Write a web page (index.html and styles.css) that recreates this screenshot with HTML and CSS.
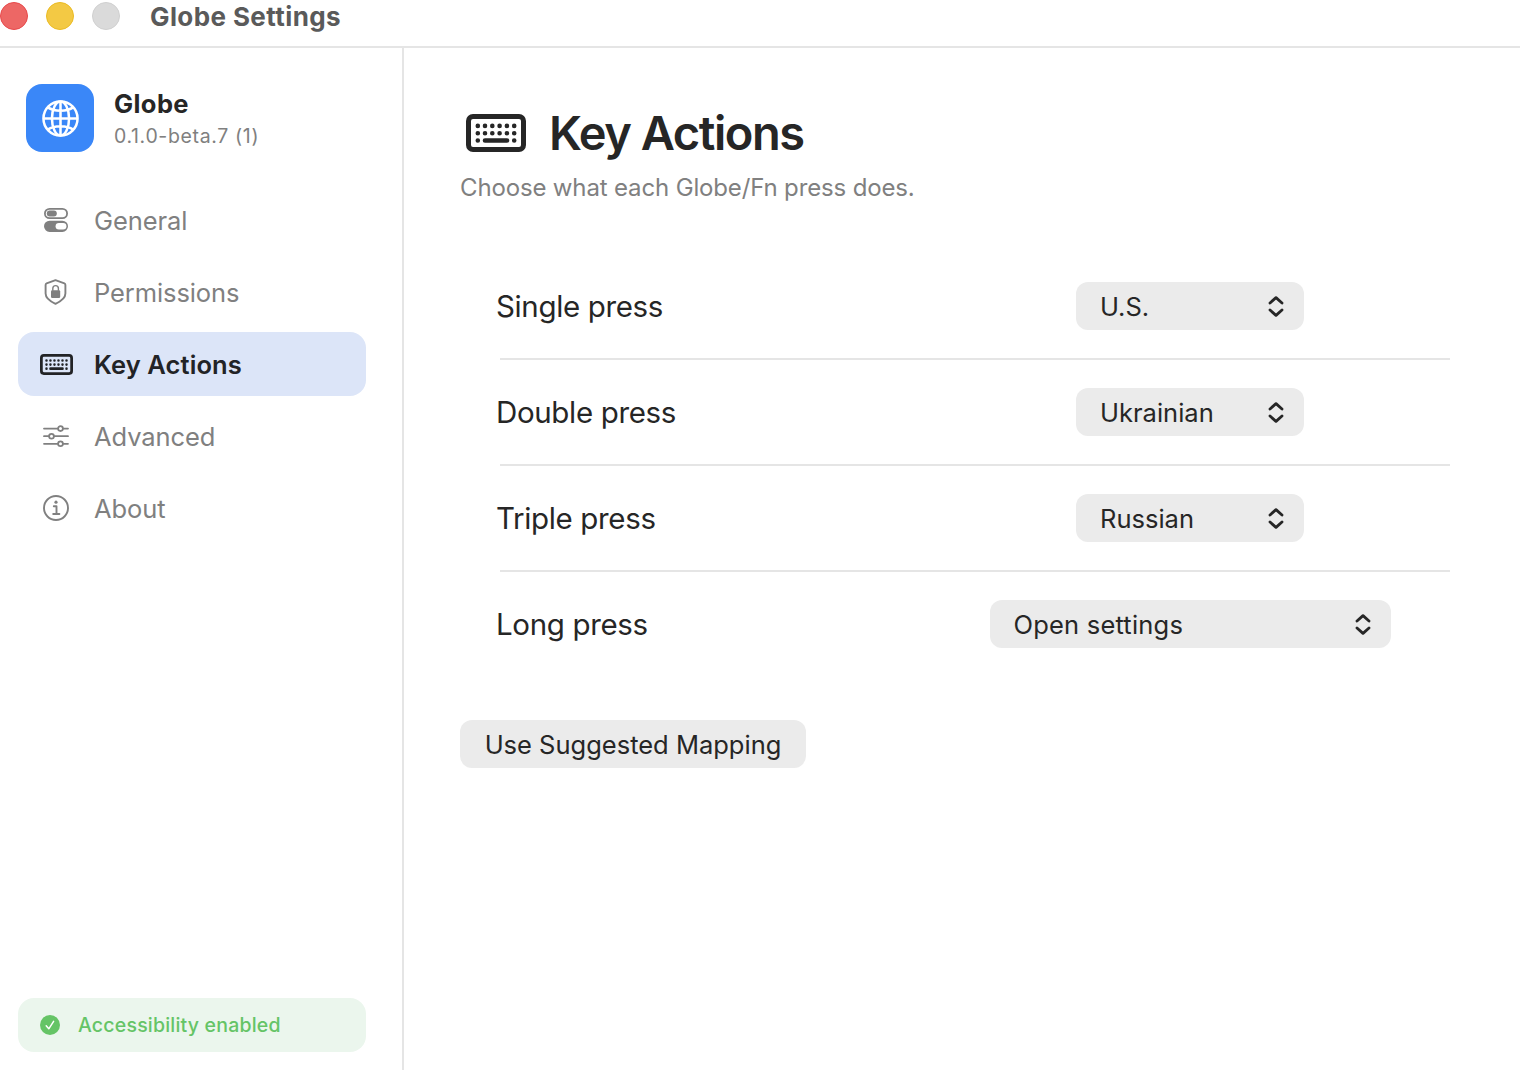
FILE: index.html
```html
<!DOCTYPE html>
<html lang="en">

<head>
    <meta charset="UTF-8">
    <meta name="viewport" content="width=device-width, initial-scale=1.0">
    <title>Globe Settings</title>
    <link rel="stylesheet" href="styles.css">
</head>

<body>
    <!-- shared icons -->
    <svg class="sprite" width="0" height="0">
        <symbol id="updown" viewBox="0 0 16 22">
            <path d="M2 7 L8 1.6 L14 7 M2 14 L8 19.4 L14 14" fill="none" stroke="currentColor" stroke-width="2.8" stroke-linecap="round" stroke-linejoin="round"/>
        </symbol>
        <symbol id="keyboard" viewBox="0 0 60 38">
            <rect x="2.5" y="2.5" width="55" height="33" rx="4.5" fill="none" stroke="currentColor" stroke-width="5"/>
            <path d="M11.8 11.9h.01M19 11.9h.01M26.3 11.9h.01M33.6 11.9h.01M40.9 11.9h.01M48.2 11.9h.01M11.8 19.2h.01M19 19.2h.01M26.3 19.2h.01M33.6 19.2h.01M40.9 19.2h.01M48.2 19.2h.01M11.8 26.5h.01M19 26.5H41M48.2 26.5h.01" fill="none" stroke="currentColor" stroke-width="4.6" stroke-linecap="round"/>
        </symbol>
    </svg>

    <header class="titlebar">
        <div class="lights">
            <span class="light red"></span>
            <span class="light yellow"></span>
            <span class="light gray"></span>
        </div>
        <span class="titlebar-text">Globe Settings</span>
    </header>

    <div class="window">
        <aside class="sidebar">
            <div class="app">
                <div class="app-icon">
                    <svg width="37" height="37" viewBox="0 0 38 38" fill="none" stroke="#fff" stroke-width="2.6">
                        <circle cx="19" cy="19" r="17.5"/>
                        <ellipse cx="19" cy="19" rx="8.8" ry="17.5"/>
                        <path d="M19 1.7v34.6M1.7 19h34.6M6 7.6c6.5 4.6 19.5 4.6 26 0M6 30.4c6.5-4.6 19.5-4.6 26 0"/>
                    </svg>
                </div>
                <div class="app-info">
                    <div class="app-name">Globe</div>
                    <div class="app-version">0.1.0-beta.7 (1)</div>
                </div>
            </div>

            <nav class="nav">
                <a class="nav-item">
                    <span class="nav-icon">
                        <svg width="26" height="26" viewBox="0 0 26 26">
                            <rect x="1.9" y="1.8" width="22.2" height="9.4" rx="4.7" fill="none" stroke="currentColor" stroke-width="1.8"/>
                            <rect x="3.8" y="3.6" width="10" height="5.8" rx="2.9" fill="currentColor"/>
                            <rect x="1.9" y="14.6" width="22.2" height="9.4" rx="4.7" fill="currentColor" stroke="currentColor" stroke-width="1.8"/>
                            <rect x="12.6" y="16" width="10.8" height="6.6" rx="3.3" fill="#fff"/>
                        </svg>
                    </span>
                    <span class="nav-text">General</span>
                </a>
                <a class="nav-item">
                    <span class="nav-icon">
                        <svg width="26" height="26" viewBox="0 0 26 26">
                            <path d="M12.5 1.2L21.4 4.4Q22.4 4.8 22.4 6V14.5C22.4 19.5 18 22.3 12.5 24.8C7 22.3 2.6 19.5 2.6 14.5V6Q2.6 4.8 3.6 4.4Z" fill="none" stroke="currentColor" stroke-width="1.9" stroke-linejoin="round"/>
                            <rect x="8" y="11.3" width="9.2" height="7.6" rx="1.2" fill="currentColor"/>
                            <path d="M9.8 11.8V9.4a2.8 2.8 0 0 1 5.6 0v2.4" fill="none" stroke="currentColor" stroke-width="1.4"/>
                        </svg>
                    </span>
                    <span class="nav-text">Permissions</span>
                </a>
                <a class="nav-item active">
                    <span class="nav-icon"><svg width="33" height="21"><use href="#keyboard"/></svg></span>
                    <span class="nav-text">Key Actions</span>
                </a>
                <a class="nav-item">
                    <span class="nav-icon">
                        <svg width="26" height="24" viewBox="0 0 26 24" fill="none" stroke="currentColor" stroke-width="1.8" stroke-linecap="round">
                            <path d="M1 4.6h13.8M20.2 4.6H25M1 12.2h4.8M11.2 12.2H25M1 19.8h13.8M20.2 19.8H25"/>
                            <circle cx="17.5" cy="4.6" r="2.4"/>
                            <circle cx="8.5" cy="12.2" r="2.4"/>
                            <circle cx="17.5" cy="19.8" r="2.4"/>
                        </svg>
                    </span>
                    <span class="nav-text">Advanced</span>
                </a>
                <a class="nav-item">
                    <span class="nav-icon">
                        <svg width="26" height="26" viewBox="0 0 26 26" fill="none" stroke="currentColor" stroke-width="1.9">
                            <circle cx="13" cy="13" r="12"/>
                            <path d="M10.8 11.3h2.7v7.4M10.2 19h6.2" stroke-linecap="round" stroke-linejoin="round"/>
                            <circle cx="13" cy="7.2" r="1.6" fill="currentColor" stroke="none"/>
                        </svg>
                    </span>
                    <span class="nav-text">About</span>
                </a>
            </nav>

            <div class="status">
                <svg width="20" height="20" viewBox="0 0 20 20">
                    <circle cx="10" cy="10" r="10" fill="#65c466"/>
                    <path d="M6.2 10.8L8.8 13.8L13.6 6.4" fill="none" stroke="#fff" stroke-width="1.5" stroke-linecap="round" stroke-linejoin="round"/>
                </svg>
                <span>Accessibility enabled</span>
            </div>
        </aside>

        <main class="content">
            <div class="heading">
                <svg width="60" height="38"><use href="#keyboard"/></svg>
                <h1>Key Actions</h1>
            </div>
            <p class="subtitle">Choose what each Globe/Fn press does.</p>

            <div class="rows">
                <div class="row">
                    <span class="label">Single press</span>
                    <div class="control">
                        <div class="select">U.S.<svg width="16" height="22"><use href="#updown"/></svg></div>
                    </div>
                </div>
                <div class="row">
                    <span class="label">Double press</span>
                    <div class="control">
                        <div class="select">Ukrainian<svg width="16" height="22"><use href="#updown"/></svg></div>
                    </div>
                </div>
                <div class="row">
                    <span class="label">Triple press</span>
                    <div class="control">
                        <div class="select">Russian<svg width="16" height="22"><use href="#updown"/></svg></div>
                    </div>
                </div>
                <div class="row">
                    <span class="label">Long press</span>
                    <div class="control">
                        <div class="select wide">Open settings<svg width="16" height="22"><use href="#updown"/></svg></div>
                    </div>
                </div>
            </div>

            <button class="button">Use Suggested Mapping</button>
        </main>
    </div>
</body>

</html>
```

FILE: styles.css
```css
* {
    box-sizing: border-box;
}

body {
    margin: 0;
    height: 1070px;
    display: flex;
    flex-direction: column;
    overflow: hidden;
    background: #fff;
    color: #262626;
    font-family: Inter, "Liberation Sans", sans-serif;
}

svg {
    display: block;
    flex-shrink: 0;
}

.sprite {
    display: none;
}

/* title bar */
.titlebar {
    height: 48px;
    flex-shrink: 0;
    display: flex;
    align-items: flex-start;
    gap: 30px;
    padding-top: 2px;
    border-bottom: 2px solid #e5e5e5;
}

.lights {
    display: flex;
    gap: 18px;
}

.light {
    width: 28px;
    height: 28px;
    border-radius: 50%;
}

.red {
    background: #ed6765;
    border: 1px solid #e8484a;
}

.yellow {
    background: #f3c944;
    border: 1px solid #ebbb22;
}

.gray {
    background: #dadada;
    border: 1px solid #d0d0d0;
}

.titlebar-text {
    font-size: 26px;
    line-height: 30px;
    font-weight: 700;
    letter-spacing: 0.4px;
    color: #5a5a5a;
}

.window {
    flex: 1;
    display: flex;
}

/* sidebar */
.sidebar {
    width: 404px;
    display: flex;
    flex-direction: column;
    padding: 36px 36px 18px 18px;
    border-right: 2px solid #e5e5e5;
}

.app {
    display: flex;
    gap: 20px;
    padding-left: 8px;
    margin-bottom: 36px;
}

.app-icon {
    width: 68px;
    height: 68px;
    display: flex;
    align-items: center;
    justify-content: center;
    padding: 1px 0 0 1px;
    border-radius: 16px;
    background: #3a87f8;
}

.app-name {
    margin-top: 4px;
    font-size: 25.5px;
    line-height: 32px;
    font-weight: 700;
    letter-spacing: 0.4px;
}

.app-version {
    font-size: 19.5px;
    line-height: 32px;
    letter-spacing: 0.65px;
    color: #808080;
}

.nav {
    display: flex;
    flex-direction: column;
    gap: 8px;
}

.nav-item {
    height: 64px;
    display: flex;
    align-items: center;
    gap: 18px;
    padding-left: 18px;
    border-radius: 16px;
    color: #808080;
    font-size: 25.5px;
    letter-spacing: -0.1px;
}

.nav-icon {
    width: 40px;
    display: flex;
    justify-content: center;
}

.nav-item.active {
    background: #dce5f8;
    color: #222326;
    font-weight: 600;
    letter-spacing: 0.1px;
}

.nav-item.active .nav-icon {
    padding-top: 1px;
}

.status {
    height: 54px;
    display: flex;
    align-items: center;
    gap: 18px;
    margin-top: auto;
    padding-left: 22px;
    border-radius: 16px;
    background: #ebf6ed;
    color: #65c466;
    font-size: 19.5px;
    font-weight: 500;
    letter-spacing: 0.2px;
}

/* content */
.content {
    flex: 1;
    padding: 56px 70px 0 56px;
}

.heading {
    display: flex;
    align-items: center;
    gap: 23px;
    height: 58px;
    padding-left: 6px;
}

h1 {
    margin: 0;
    font-size: 47px;
    line-height: 58px;
    font-weight: 600;
    letter-spacing: -1.45px;
}

.subtitle {
    margin: 10px 0 50px;
    font-size: 24px;
    line-height: 32px;
    letter-spacing: -0.15px;
    color: #808080;
}

.rows {
    padding-left: 40px;
}

.row {
    display: flex;
    align-items: center;
    justify-content: space-between;
    height: 106px;
    border-bottom: 2px solid #e5e5e5;
}

.row:last-child {
    border-color: transparent;
}

.label {
    margin-left: -4px;
    font-size: 29.5px;
    letter-spacing: -0.35px;
}

.control {
    width: 520px;
    display: flex;
    justify-content: center;
}

.select {
    width: 228px;
    height: 48px;
    display: flex;
    align-items: center;
    justify-content: space-between;
    padding: 1px 20px 0 24px;
    border-radius: 12px;
    background: #ebebeb;
    font-size: 25.5px;
}

.select.wide {
    width: 401px;
    letter-spacing: 0.2px;
}

.button {
    display: block;
    width: 346px;
    height: 48px;
    margin-top: 42px;
    padding: 0;
    border: 0;
    border-radius: 12px;
    background: #ebebeb;
    color: #262626;
    font-family: inherit;
    font-size: 25.5px;
    white-space: nowrap;
}
```
